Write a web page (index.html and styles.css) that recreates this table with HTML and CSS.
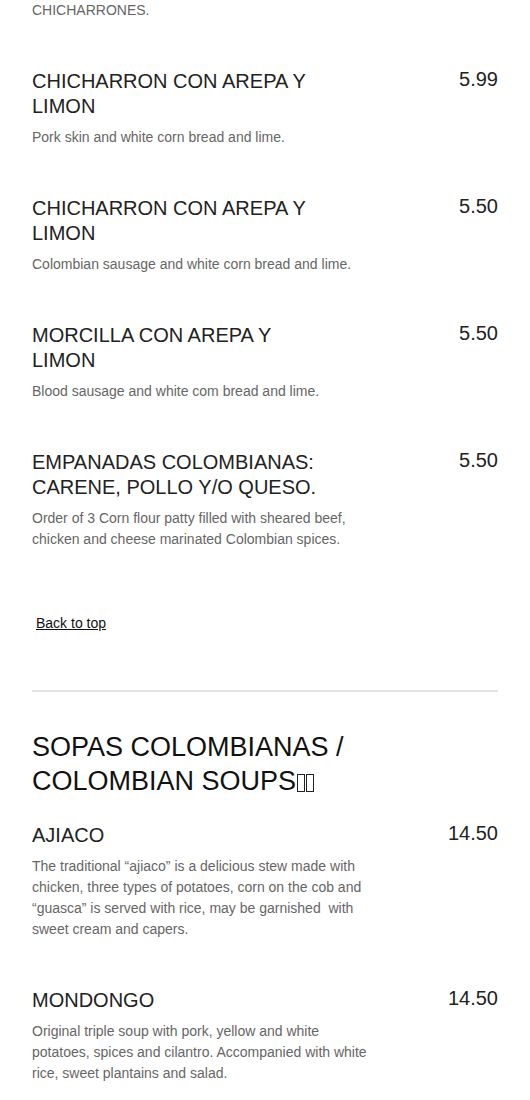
FILE: index.html
```html
<!DOCTYPE html>
<html>
<head>
<meta charset="utf-8">
<link rel="stylesheet" href="styles.css">
</head>
<body>
<div class="page">
  <p class="desc lead">CHICHARRONES.</p>

  <div class="item">
    <div class="text">
      <h3 class="name">CHICHARRON CON AREPA Y LIMON</h3>
      <p class="desc">Pork skin and white corn bread and lime.</p>
    </div>
    <div class="price">5.99</div>
  </div>

  <div class="item">
    <div class="text">
      <h3 class="name">CHICHARRON CON AREPA Y LIMON</h3>
      <p class="desc">Colombian sausage and white corn bread and lime.</p>
    </div>
    <div class="price">5.50</div>
  </div>

  <div class="item">
    <div class="text">
      <h3 class="name">MORCILLA CON AREPA Y LIMON</h3>
      <p class="desc">Blood sausage and white com bread and lime.</p>
    </div>
    <div class="price">5.50</div>
  </div>

  <div class="item">
    <div class="text">
      <h3 class="name">EMPANADAS COLOMBIANAS: CARENE, POLLO Y/O QUESO.</h3>
      <p class="desc">Order of 3 Corn flour patty filled with sheared beef, chicken and cheese marinated Colombian spices.</p>
    </div>
    <div class="price">5.50</div>
  </div>

  <div class="back"><a href="#" class="back-link">Back to top</a></div>

  <hr class="sep">

  <h2 class="section">SOPAS COLOMBIANAS / COLOMBIAN SOUPS<span class="tofu"></span><span class="tofu"></span></h2>

  <div class="item">
    <div class="text">
      <h3 class="name">AJIACO</h3>
      <p class="desc">The traditional “ajiaco” is a delicious stew made with chicken, three types of potatoes, corn on the cob and “guasca” is served with rice, may be garnished&nbsp; with sweet cream and capers.</p>
    </div>
    <div class="price">14.50</div>
  </div>

  <div class="item">
    <div class="text">
      <h3 class="name">MONDONGO</h3>
      <p class="desc">Original triple soup with pork, yellow and white potatoes, spices and cilantro. Accompanied with white rice, sweet plantains and salad.</p>
    </div>
    <div class="price">14.50</div>
  </div>
</div>
</body>
</html>
```

FILE: styles.css
```css
html, body {
  margin: 0;
  padding: 0;
  background: #ffffff;
}

body {
  font-family: "Liberation Sans", Arial, sans-serif;
  color: #222222;
}

.page {
  padding: 0 32px;
}

.item {
  display: flex;
  justify-content: space-between;
  align-items: flex-start;
  margin-bottom: 48px;
}

.text {
  width: 342px;
}

.name {
  margin: 0;
  max-width: 300px;
  font-size: 20px;
  line-height: 25px;
  font-weight: normal;
  color: #222222;
}

.desc {
  margin: 8px 0 0 0;
  font-size: 14px;
  line-height: 21px;
  color: #666666;
}

.desc.lead {
  margin: 0 0 48px 0;
}

.price {
  font-size: 20px;
  line-height: 21px;
  color: #222222;
}

.back {
  margin-top: 63px;
  padding-left: 4px;
  font-size: 14px;
  line-height: 21px;
}

.back-link {
  color: #111111;
  text-decoration: underline;
}

.sep {
  margin: 56px 0 0 0;
  border: 0;
  border-top: 2px solid #e3e3e3;
  height: 0;
}

.section {
  max-width: 342px;
  margin: 38px 0 25px 0;
  font-size: 27px;
  line-height: 34px;
  font-weight: normal;
  color: #111111;
}

.tofu {
  display: inline-block;
  width: 8px;
  height: 18px;
  border: 1px solid #222222;
  box-sizing: border-box;
  margin-left: 1px;
  vertical-align: -2px;
}
```
